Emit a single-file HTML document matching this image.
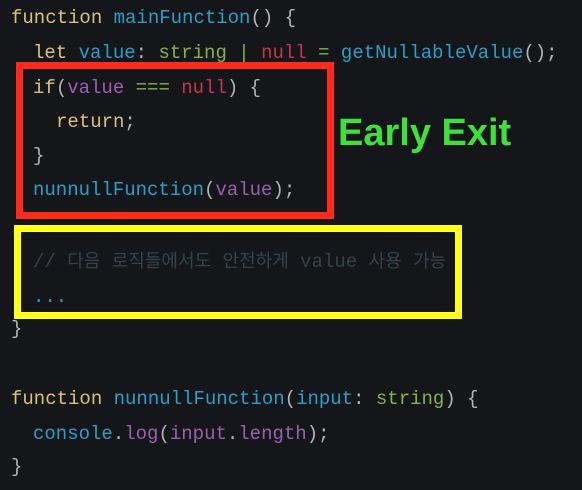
<!DOCTYPE html>
<html><head><meta charset="utf-8"><style>
body{margin:0;width:582px;height:490px;background:#141619;overflow:hidden;position:relative;font-family:"Liberation Mono","Noto Sans CJK KR",monospace;font-size:19px;color:#b4b4b4}
.l{position:absolute;white-space:pre;line-height:22px}
.k{color:#d9c27c}.f{color:#2a9fc6}.g{color:#86b04f}.r{color:#c9344a}.p{color:#9a5fb0}.c{color:#34434f}
.h{font-size:18px}
.box{position:absolute;box-sizing:border-box}
</style></head><body>
<div class="l" style="left:11px;top:7px"><span class="k">function</span> <span class="f">mainFunction</span>() {</div>
<div class="l" style="left:33px;top:42px"><span class="k">let</span> <span class="f">value</span>: <span class="g">string</span> <span class="g">|</span> <span class="r">null</span> <span class="g">=</span> <span class="f">getNullableValue</span>();</div>
<div class="l" style="left:33px;top:77px"><span class="k">if</span>(<span class="p">value</span> <span class="g">===</span> <span class="r">null</span>) {</div>
<div class="l" style="left:56px;top:111px"><span class="k">return</span>;</div>
<div class="l" style="left:33px;top:145px">}</div>
<div class="l" style="left:33px;top:179px"><span class="f">nunnullFunction</span>(<span class="p">value</span>);</div>
<div class="l c" style="left:33px;top:251px">// <span class="h">다음</span> <span class="h">로직들에서도</span> <span class="h">안전하게</span> value <span class="h">사용</span> <span class="h">가능</span></div>
<div class="l f" style="left:33px;top:286px">...</div>
<div class="l" style="left:11px;top:318px">}</div>
<div class="l" style="left:11px;top:388px"><span class="k">function</span> <span class="f">nunnullFunction</span>(<span class="f">input</span>: <span class="g">string</span>) {</div>
<div class="l" style="left:33px;top:423px"><span class="f">console</span>.<span class="p">log</span>(<span class="p">input</span>.<span class="p">length</span>);</div>
<div class="l" style="left:11px;top:456px">}</div>
<div class="box" style="left:16px;top:62px;width:318px;height:157px;border:7px solid #ff2a1a"></div>
<div class="box" style="left:14px;top:225px;width:448px;height:94px;border:7px solid #ffff1a"></div>
<div class="l" style="left:338px;top:112px;font-family:'Liberation Sans',sans-serif;font-weight:bold;font-size:38px;line-height:42px;color:#3ee03a">Early Exit</div>
</body></html>
